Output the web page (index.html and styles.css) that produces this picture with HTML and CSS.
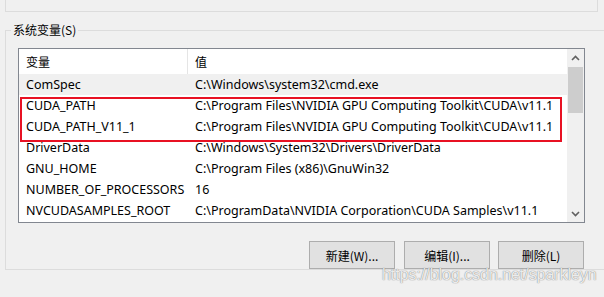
FILE: index.html
```html
<!DOCTYPE html>
<html>
<head>
<meta charset="utf-8">
<link rel="stylesheet" href="styles.css">
</head>
<body>
<div class="topbox"></div>
<fieldset class="group">
  <legend class="group-title">系统变量(S)</legend>
  <div class="list">
    <div class="table">
      <div class="head">
        <div class="c1 hc">变量</div>
        <div class="sep"></div>
        <div class="c2 hc">值</div>
      </div>
      <div class="row hover"><div class="c1">ComSpec</div><div class="c2">C:\Windows\system32\cmd.exe</div></div>
      <div class="row"><div class="c1">CUDA_PATH</div><div class="c2">C:\Program Files\NVIDIA GPU Computing Toolkit\CUDA\v11.1</div></div>
      <div class="row"><div class="c1">CUDA_PATH_V11_1</div><div class="c2">C:\Program Files\NVIDIA GPU Computing Toolkit\CUDA\v11.1</div></div>
      <div class="row"><div class="c1">DriverData</div><div class="c2">C:\Windows\System32\Drivers\DriverData</div></div>
      <div class="row"><div class="c1">GNU_HOME</div><div class="c2">C:\Program Files (x86)\GnuWin32</div></div>
      <div class="row"><div class="c1">NUMBER_OF_PROCESSORS</div><div class="c2">16</div></div>
      <div class="row"><div class="c1">NVCUDASAMPLES_ROOT</div><div class="c2">C:\ProgramData\NVIDIA Corporation\CUDA Samples\v11.1</div></div>
      <div class="mark"></div>
    </div>
    <div class="scrollbar">
      <div class="arrow">
        <svg width="9" height="6" viewBox="0 0 9 6"><path d="M1 5 L4.5 1.5 L8 5" fill="none" stroke="#606060" stroke-width="1.6"/></svg>
      </div>
      <div class="track"><div class="thumb"></div></div>
      <div class="arrow">
        <svg width="9" height="6" viewBox="0 0 9 6"><path d="M1 1 L4.5 4.5 L8 1" fill="none" stroke="#606060" stroke-width="1.6"/></svg>
      </div>
    </div>
  </div>
  <div class="buttons">
    <button class="btn">新建(W)...</button>
    <button class="btn b2">编辑(I)...</button>
    <button class="btn b3">删除(L)</button>
  </div>
</fieldset>
<div class="watermark">https://blog.csdn.net/sparkleyn</div>
</body>
</html>
```
FILE: styles.css
```css
html, body {
  margin: 0;
  padding: 0;
  background: #f0f0f0;
  width: 604px;
  height: 297px;
  overflow: hidden;
  font-family: "Noto Sans", "Noto Sans CJK SC", sans-serif;
  font-size: 12.5px;
  color: #000;
  position: relative;
}
.topbox {
  margin-left: 5px;
  width: 591px;
  height: 11px;
  border: 1px solid #dcdcdc;
  border-top: none;
}
.group {
  margin: 10px 0 0 5px;
  width: 590px;
  height: 246px;
  padding: 0 0 0 12px;
  border: 1px solid #dcdcdc;
  box-sizing: content-box;
}
.group-title {
  margin-left: -7px;
  padding: 0 2px;
  line-height: 16px;
  font-size: 12px;
  font-family: "Noto Sans CJK SC", sans-serif;
}
.list {
  margin-top: 10px;
  width: 565px;
  height: 173px;
  border: 1px solid #828790;
  background: #fff;
  display: flex;
}
.table {
  width: 548px;
  position: relative;
}
.head {
  height: 25px;
  display: flex;
  align-items: stretch;
}
.hc {
  line-height: 25px;
  font-size: 12px;
  font-family: "Noto Sans CJK SC", sans-serif;
}
.sep {
  width: 1px;
  background: #e5e5e5;
}
.c1 {
  width: 161px;
  padding-left: 7px;
  white-space: nowrap;
}
.c2 {
  padding-left: 7px;
  white-space: nowrap;
}
.row {
  display: flex;
  height: 21px;
  line-height: 21px;
}
.row .c1 {
  width: 162px;
}
.hover {
  background: #f0f0f0;
}
.mark {
  position: absolute;
  left: 1px;
  top: 48px;
  width: 538px;
  height: 41px;
  border: 2px solid #e81123;
}
.scrollbar {
  width: 17px;
  background: #f0f0f0;
  display: flex;
  flex-direction: column;
}
.arrow {
  height: 17px;
  display: flex;
  align-items: center;
  justify-content: center;
}
.track {
  flex: 1;
  padding: 1px 1px 0 1px;
}
.thumb {
  height: 46px;
  background: #cdcdcd;
}
.buttons {
  display: flex;
  margin-top: 18px;
  padding-left: 291px;
}
.btn {
  width: 86px;
  height: 28px;
  margin: 0;
  padding: 0;
  background: #e1e1e1;
  border: 1px solid #adadad;
  font-family: "Noto Sans CJK SC", sans-serif;
  font-size: 12px;
  color: #000;
}
.b2 { margin-left: 9px; }
.b3 { margin-left: 8px; }
.watermark {
  position: absolute;
  left: 382px;
  top: 266px;
  font-family: "Liberation Sans", sans-serif;
  font-size: 15.9px;
  color: rgba(255, 255, 255, 0.85);
  text-shadow: 0 0 1px rgba(110, 110, 110, 0.8), 0 0 1px rgba(110, 110, 110, 0.5);
  white-space: nowrap;
}
```
